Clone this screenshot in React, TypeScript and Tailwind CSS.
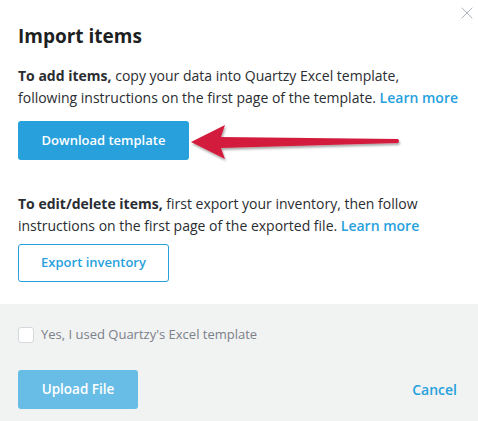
import { X } from 'lucide-react';

function Arrow() {
  return (
    <svg width="214" height="44" viewBox="0 0 214 44" className="absolute left-[188px] top-[121px]">
      <defs>
        <filter id="sh" x="-10%" y="-30%" width="130%" height="170%">
          <feDropShadow dx="1" dy="2" stdDeviation="1.2" floodColor="#000" floodOpacity="0.35" />
        </filter>
      </defs>
      <path
        d="M3 21 L37 4 L33 16 L210 18 Q212 20 210 22 L33 27 L37 38 Z"
        fill="#d31f3c"
        filter="url(#sh)"
      />
    </svg>
  );
}

export default function App() {
  return (
    <div className="relative h-[421px] w-[478px] overflow-hidden bg-white font-['Open_Sans',sans-serif] text-[#212529]">
      <button className="absolute left-[457px] top-[3px] text-[#9aa3ae]">
        <X className="h-[20px] w-[20px]" strokeWidth={1} />
      </button>
      <div className="pl-[18px] pr-[20px] pt-[22px]">
        <h1 className="text-[19px] font-bold leading-[28px] text-[#1d1f22]">Import items</h1>
        <p className="mt-[15px] text-[14px] leading-[22px] text-[#2a2d31]">
          <span className="font-bold">To add items,</span> copy your data into Quartzy Excel template,
          following instructions on the first page of the template.{' '}
          <a className="font-semibold text-[#27a1dd]">Learn more</a>
        </p>
        <button className="mt-[12px] h-[39px] w-[171px] rounded-[3px] bg-[#27a0dc] text-[13px] font-semibold text-white">
          Download template
        </button>
        <p className="mt-[33px] text-[14px] leading-[22px] text-[#2a2d31]">
          <span className="font-bold">To edit/delete items,</span> first export your inventory, then follow
          instructions on the first page of the exported file.{' '}
          <a className="font-semibold text-[#27a1dd]">Learn more</a>
        </p>
        <button className="mt-[7px] h-[38px] w-[151px] rounded-[3px] border border-[#27a0dc] text-[13px] font-semibold text-[#27a1dd]">
          Export inventory
        </button>
      </div>
      <div className="mt-[22px] h-[200px] bg-[#f1f2f2] px-[18px] pt-[21px]">
        <label className="flex items-center gap-[7px] text-[13px] text-[#7b8089]">
          <span className="h-[16px] w-[16px] rounded-[3px] border border-[#d5d9de] bg-white" />
          Yes, I used Quartzy's Excel template
        </label>
        <div className="mt-[25px] flex items-center justify-between pr-[3px]">
          <button className="h-[39px] w-[120px] rounded-[3px] bg-[#68bde6] text-[13.5px] font-semibold text-white">
            Upload File
          </button>
          <a className="text-[14px] font-semibold text-[#27a1dd]">Cancel</a>
        </div>
      </div>
      <Arrow />
    </div>
  );
}
